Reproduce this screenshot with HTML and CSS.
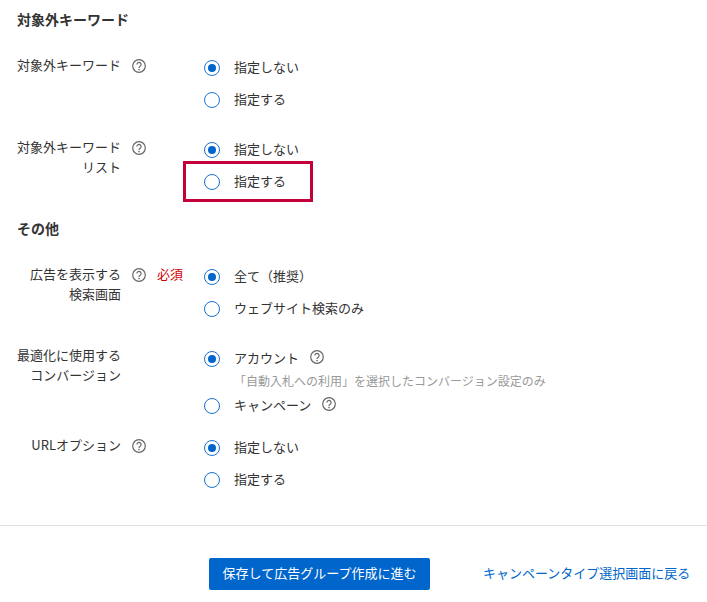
FILE: index.html
```html
<!DOCTYPE html>
<html>
	<head>
		<meta content="text/html;charset=utf-8" http-equiv="Content-Type" />
		<title>キャンペーン設定</title>
		<link rel="stylesheet" href="styles.css">
	</head>
	<body>
		<svg class="defs" width="0" height="0">
			<symbol id="help" viewBox="0 0 14 14">
				<circle cx="7" cy="7" r="6.3" fill="none" stroke="#666" stroke-width="1.2" />
				<path d="M4.9 5.5a2.1 2.1 0 1 1 3.3 1.7c-.8.5-1.2.9-1.2 1.7" fill="none" stroke="#666" stroke-width="1.2" />
				<circle cx="7" cy="10.6" r=".8" fill="#666" />
			</symbol>
		</svg>

		<h2 class="section-title">対象外キーワード</h2>
		<div class="field">
			<div class="field-head">
				<div class="field-label">対象外キーワード</div>
				<svg class="help"><use href="#help" /></svg>
			</div>
			<div class="options">
				<div class="option"><span class="radio checked"></span>指定しない</div>
				<div class="option"><span class="radio"></span>指定する</div>
			</div>
		</div>
		<div class="field">
			<div class="field-head">
				<div class="field-label">対象外キーワード<br>リスト</div>
				<svg class="help"><use href="#help" /></svg>
			</div>
			<div class="options">
				<div class="option"><span class="radio checked"></span>指定しない</div>
				<div class="option"><span class="radio"></span>指定する<span class="highlight"></span></div>
			</div>
		</div>

		<h2 class="section-title second">その他</h2>
		<div class="field">
			<div class="field-head">
				<div class="field-label">広告を表示する<br>検索画面</div>
				<svg class="help"><use href="#help" /></svg>
				<span class="required">必須</span>
			</div>
			<div class="options">
				<div class="option"><span class="radio checked"></span>全て（推奨）</div>
				<div class="option"><span class="radio"></span>ウェブサイト検索のみ</div>
			</div>
		</div>
		<div class="field">
			<div class="field-head raised">
				<div class="field-label">最適化に使用する<br>コンバージョン</div>
			</div>
			<div class="options">
				<div class="option"><span class="radio checked"></span>アカウント<svg class="help"><use href="#help" /></svg></div>
				<div class="hint">「自動入札への利用」を選択したコンバージョン設定のみ</div>
				<div class="option"><span class="radio"></span>キャンペーン<svg class="help"><use href="#help" /></svg></div>
			</div>
		</div>
		<div class="field tight">
			<div class="field-head">
				<div class="field-label">URLオプション</div>
				<svg class="help"><use href="#help" /></svg>
			</div>
			<div class="options">
				<div class="option"><span class="radio checked"></span>指定しない</div>
				<div class="option"><span class="radio"></span>指定する</div>
			</div>
		</div>

		<div class="footer">
			<a class="button" href="#">保存して広告グループ作成に進む</a>
			<a class="back-link" href="#">キャンペーンタイプ選択画面に戻る</a>
		</div>
	</body>
</html>
```
FILE: styles.css
```css
body {
	margin: 0px;
	padding-top: 9px;
	font-family: "Noto Sans CJK JP", "Noto Sans", sans-serif;
	font-size: 13px;
	color: #333;
	background-color: white;
}

.defs {
	position: absolute;
}

.section-title {
	margin: 0px 0px 22px 17px;
	font-size: 14px;
	line-height: 20px;
	font-weight: bold;
}

.section-title.second {
	margin-top: 21px;
}

.field {
	display: flex;
	margin-bottom: 18px;
}

.field.tight {
	margin-top: -8px;
}

.field-head {
	display: flex;
	align-items: flex-start;
	width: 204px;
	padding-top: 4px;
}

.field-head.raised {
	padding-top: 3px;
}

.field-label {
	width: 121px;
	text-align: right;
	line-height: 20px;
}

.help {
	width: 14px;
	height: 14px;
	margin-left: 11px;
	margin-top: 4px;
}

.required {
	margin-left: 11px;
	font-size: 13px;
	line-height: 20px;
	color: #d00000;
}

.option {
	position: relative;
	box-sizing: border-box;
	display: flex;
	align-items: center;
	height: 32px;
	padding-bottom: 2px;
}

.option .help {
	margin-top: 0px;
}

.radio {
	box-sizing: border-box;
	display: flex;
	align-items: center;
	justify-content: center;
	width: 16px;
	height: 16px;
	margin-top: 4px;
	margin-right: 14px;
	border: 1.5px solid #1a73d0;
	border-radius: 50%;
}

.radio.checked::after {
	content: "";
	width: 8px;
	height: 8px;
	border-radius: 50%;
	background-color: #0066cc;
}

.highlight {
	position: absolute;
	left: -21px;
	top: -4px;
	box-sizing: border-box;
	width: 130px;
	height: 41px;
	border: 3px solid #c4003b;
}

.hint {
	margin: -2px 0px -1px 30px;
	font-size: 12px;
	line-height: 18px;
	color: #999;
}

.footer {
	display: flex;
	align-items: center;
	margin-top: 30px;
	padding: 32px 0px 0px 209px;
	border-top: 1px solid #e0e0e0;
}

.button {
	box-sizing: border-box;
	width: 221px;
	height: 32px;
	padding-bottom: 2px;
	line-height: 30px;
	text-align: center;
	border-radius: 2px;
	background-color: #0066cc;
	color: white;
	text-decoration: none;
}

.back-link {
	margin-left: 53px;
	padding-bottom: 3px;
	color: #0066cc;
	text-decoration: none;
}
```
